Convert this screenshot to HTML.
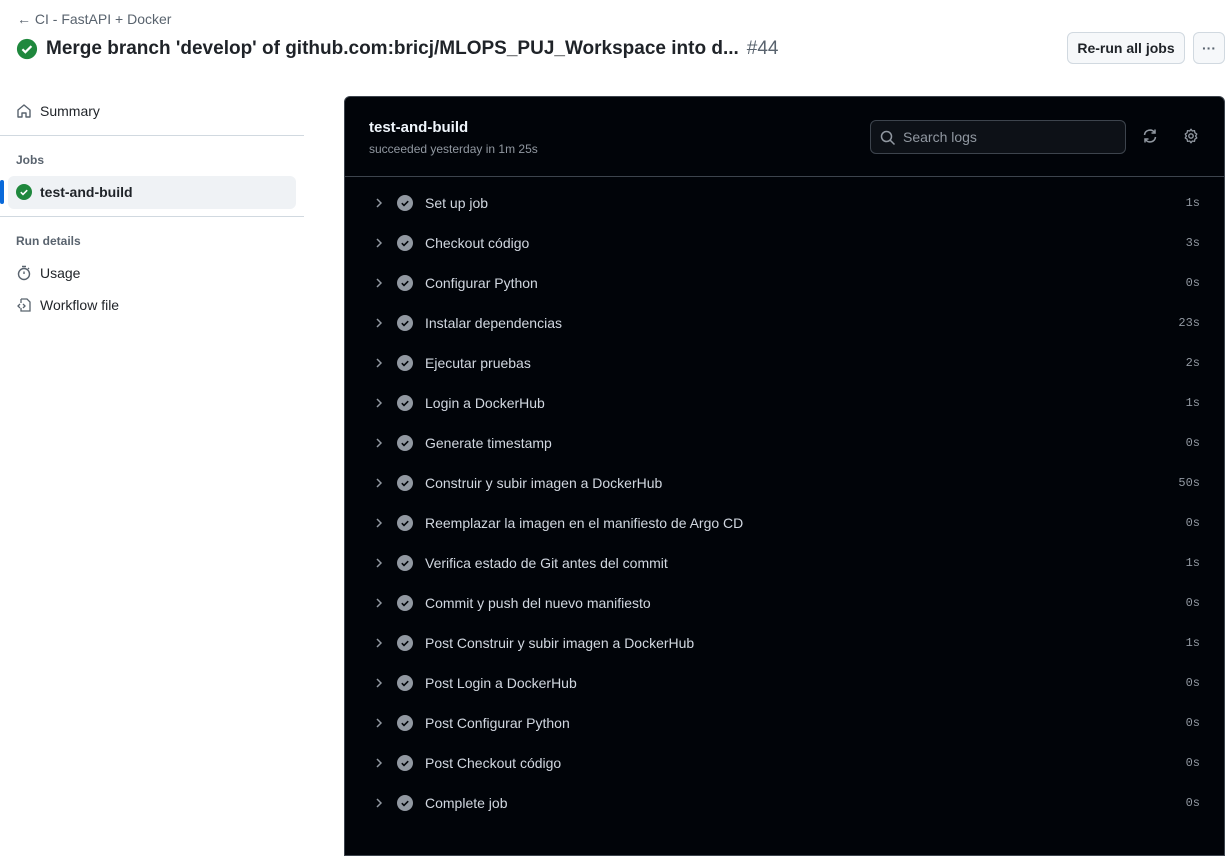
<!DOCTYPE html>
<html><head><style>
*{box-sizing:border-box;margin:0;padding:0}
body{width:1232px;height:837px;overflow:hidden;background:#fff;font-family:"Liberation Sans",sans-serif;color:#1f2328;position:relative}
.abs{position:absolute}
.back{left:17px;top:11px;font-size:14px;color:#59636e}
.title{left:16px;top:38px;font-size:19px;font-weight:600;display:flex;align-items:center;gap:8px;white-space:nowrap}
.title .num{color:#59636e;font-weight:400}
.btn{top:32px;height:32px;border:1px solid #d1d9e0;border-radius:6px;background:#f6f8fa;font-size:14px;font-weight:600;display:flex;align-items:center;justify-content:center}
.nav{font-size:14px;display:flex;align-items:center;gap:8px;left:16px}
.sec{left:16px;font-size:12px;color:#59636e;font-weight:600}
.hr{left:0;width:304px;height:1px;background:#d1d9e0}
.panel{left:344px;top:96px;width:881px;height:760px;background:#010409;border-radius:6px 6px 0 0;border:1px solid #3d444d}
.row{position:absolute;left:0;width:879px;height:40px;display:flex;align-items:center;font-size:14px;color:#d1d7e0}
.row .t{position:absolute;right:24px;font-family:"Liberation Mono",monospace;font-size:12px;color:#9198a1}
</style></head><body>
<div class="abs back">← CI - FastAPI + Docker</div>
<div class="abs title"><svg width="22" height="22" viewBox="0 0 24 24"><circle cx="12" cy="12" r="11" fill="#1f883d"/><path d="M7 12.3l3.2 3.2 6.6-6.6" stroke="#fff" stroke-width="2.4" fill="none"/></svg>Merge branch 'develop' of github.com:bricj/MLOPS_PUJ_Workspace into d... <span class="num">#44</span></div>
<div class="abs btn" style="left:1067px;width:118px">Re-run all jobs</div>
<div class="abs btn" style="left:1193px;width:32px;color:#59636e">···</div>

<div class="abs nav" style="top:103px"><svg width="16" height="16" viewBox="0 0 16 16"><path d="M2 14V7l6-5 6 5v7h-4v-4H6v4z" stroke="#59636e" stroke-width="1.4" fill="none" stroke-linejoin="round"/></svg>Summary</div>
<div class="abs hr" style="top:135px"></div>
<div class="abs sec" style="top:153px">Jobs</div>
<div class="abs" style="left:8px;top:176px;width:288px;height:33px;background:#eff2f5;border-radius:6px"></div>
<div class="abs" style="left:0;top:180px;width:4px;height:24px;background:#0969da;border-radius:2px"></div>
<div class="abs nav" style="top:184px;font-weight:600"><svg width="16" height="16" viewBox="0 0 16 16"><circle cx="8" cy="8" r="8" fill="#1f883d"/><path d="M4.8 8.2l2.2 2.2 4.2-4.2" stroke="#fff" stroke-width="1.6" fill="none"/></svg>test-and-build</div>
<div class="abs hr" style="top:216px"></div>
<div class="abs sec" style="top:234px">Run details</div>
<div class="abs nav" style="top:265px"><svg width="16" height="16" viewBox="0 0 16 16"><circle cx="8" cy="9" r="5.5" stroke="#59636e" stroke-width="1.4" fill="none"/><path d="M6 1.5h4M8 9V6.5M12 4l1-1" stroke="#59636e" stroke-width="1.4"/></svg>Usage</div>
<div class="abs nav" style="top:297px"><svg width="16" height="16" viewBox="0 0 16 16"><path d="M5 2h6l3 3v9H5v-3M5 6V2" stroke="#59636e" stroke-width="1.3" fill="none"/><path d="M4 7L2 9l2 2M7 7l2 2-2 2" stroke="#59636e" stroke-width="1.3" fill="none"/></svg>Workflow file</div>

<div class="abs panel">
<div class="abs" style="left:24px;top:22px;font-size:15px;font-weight:700;color:#f0f6fc">test-and-build</div>
<div class="abs" style="left:24px;top:45px;font-size:12px;color:#9198a1">succeeded yesterday in 1m 25s</div>
<div class="abs" style="left:525px;top:23px;width:256px;height:34px;border:1px solid #3d444d;border-radius:6px;background:#0d1117;font-size:14px;color:#9198a1;display:flex;align-items:center;padding-left:32px">Search logs
<svg class="abs" style="left:9px;top:9px" width="16" height="16" viewBox="0 0 16 16"><circle cx="6.5" cy="6.5" r="5" stroke="#9198a1" stroke-width="1.5" fill="none"/><path d="M10.3 10.3L14.5 14.5" stroke="#9198a1" stroke-width="1.5"/></svg></div>
<svg class="abs" style="left:797px;top:31px" width="16" height="16" viewBox="0 0 16 16"><path d="M2.5 7A5.5 5.5 0 0 1 12.5 4.5M13.5 9A5.5 5.5 0 0 1 3.5 11.5" stroke="#9198a1" stroke-width="1.5" fill="none"/><path d="M13 1.5v3.5H9.5M3 14.5V11h3.5" stroke="#9198a1" stroke-width="1.5" fill="none"/></svg>
<svg class="abs" style="left:838px;top:31px" width="16" height="16" viewBox="0 0 16 16"><circle cx="8" cy="8" r="2.2" stroke="#9198a1" stroke-width="1.4" fill="none"/><path d="M8 1.2l1.3 1.8 2.2-.4.4 2.2 1.9 1.2-1.2 2 1.2 2-1.9 1.2-.4 2.2-2.2-.4L8 14.8l-1.3-1.8-2.2.4-.4-2.2-1.9-1.2 1.2-2-1.2-2 1.9-1.2.4-2.2 2.2.4z" stroke="#9198a1" stroke-width="1.3" fill="none" stroke-linejoin="round"/></svg>
<div class="abs" style="left:0;top:79px;width:879px;height:1px;background:#3d444d"></div>
<div id="rows"></div>
</div>
<script>
const s=[["Set up job","1s"],["Checkout código","3s"],["Configurar Python","0s"],["Instalar dependencias","23s"],["Ejecutar pruebas","2s"],["Login a DockerHub","1s"],["Generate timestamp","0s"],["Construir y subir imagen a DockerHub","50s"],["Reemplazar la imagen en el manifiesto de Argo CD","0s"],["Verifica estado de Git antes del commit","1s"],["Commit y push del nuevo manifiesto","0s"],["Post Construir y subir imagen a DockerHub","1s"],["Post Login a DockerHub","0s"],["Post Configurar Python","0s"],["Post Checkout código","0s"],["Complete job","0s"]];
let h="";s.forEach((r,i)=>{h+=`<div class="row" style="top:${86+i*40}px"><svg style="position:absolute;left:28px" width="12" height="12" viewBox="0 0 12 12"><path d="M4 2l4 4-4 4" stroke="#9198a1" stroke-width="1.5" fill="none"/></svg><svg style="position:absolute;left:52px" width="16" height="16" viewBox="0 0 16 16"><circle cx="8" cy="8" r="8" fill="#9198a1"/><path d="M4.8 8.2l2.2 2.2 4.2-4.2" stroke="#010409" stroke-width="1.6" fill="none"/></svg><span style="position:absolute;left:80px">${r[0]}</span><span class="t">${r[1]}</span></div>`});
document.getElementById("rows").innerHTML=h;
</script>
</body></html>
